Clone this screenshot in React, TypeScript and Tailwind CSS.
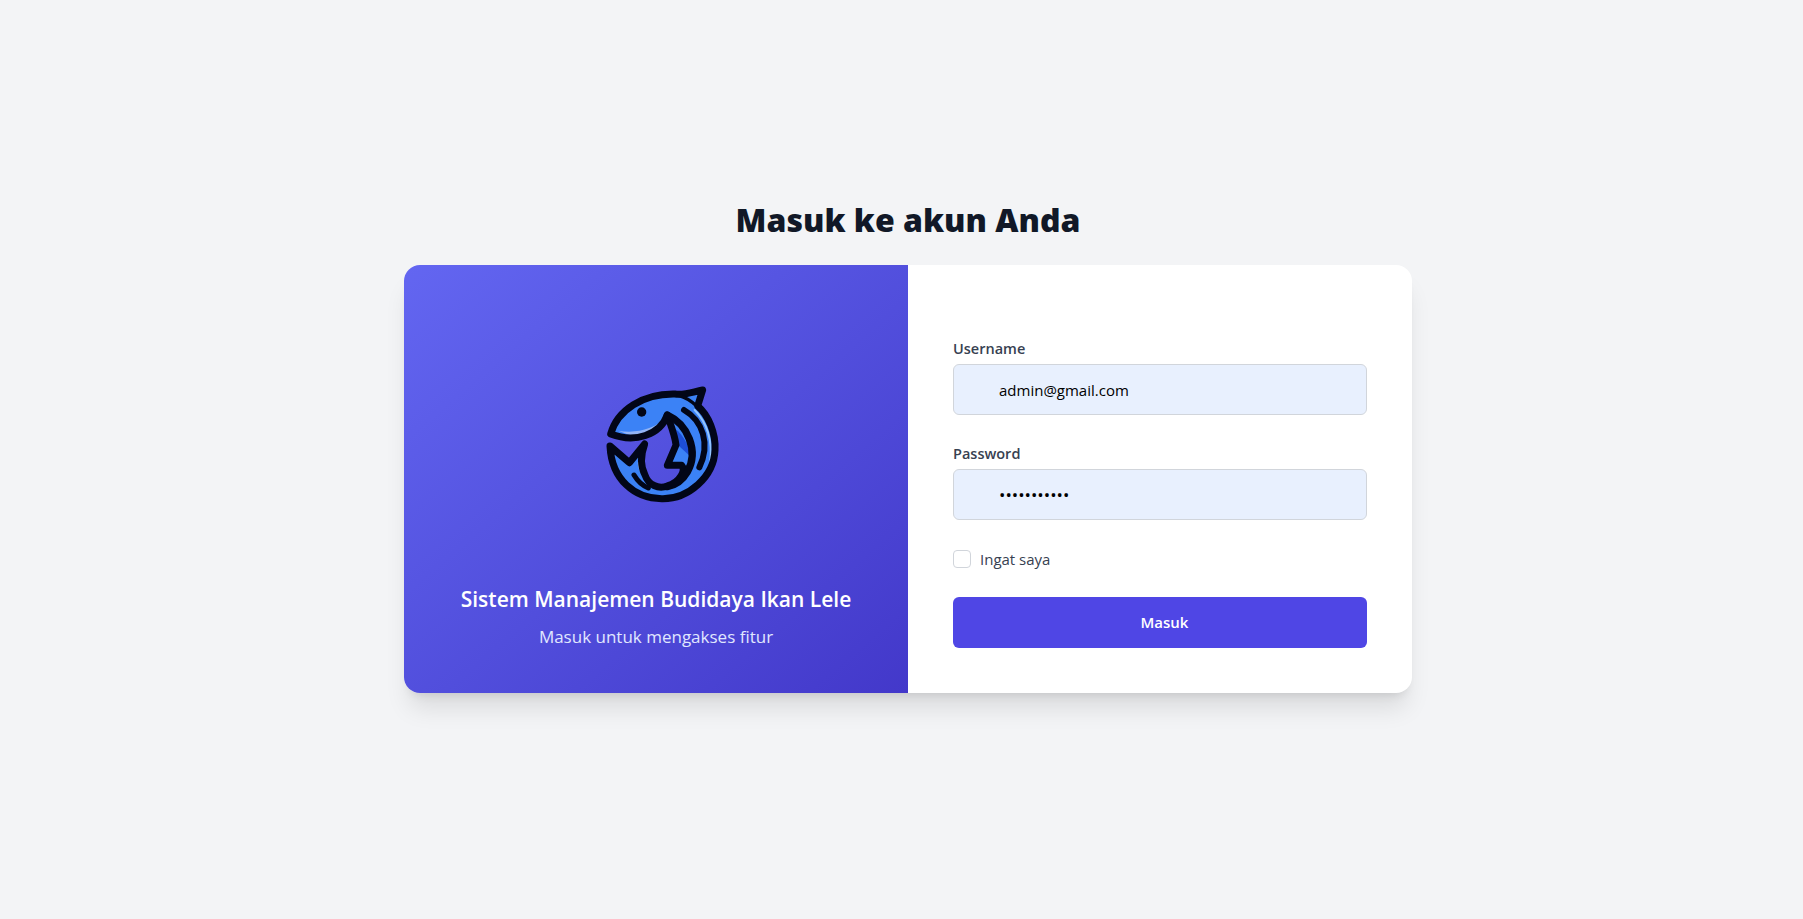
function FishLogo() {
  const ink = "#020617";
  const body = "M92 222 C112 150 190 100 285 102 C315 106 340 95 368 90 L353 138 C385 165 408 220 405 270 C402 350 325 418 245 416 C165 416 95 360 90 258 L148 308 L194 252 C182 285 182 320 195 345 C205 375 235 388 262 378 C300 368 318 330 305 316 L262 316 L288 255 C285 225 270 190 262 165 C240 225 165 250 92 222 Z";
  return (
    <svg className="block ml-[18px]" width="170" height="160" viewBox="0 0 510 480" fill="none" strokeLinecap="round" strokeLinejoin="round">
      <path d={body} fill="#3b82f6" />
      <path d="M272 198 L288 250 L332 290 C325 250 305 215 272 198 Z" fill="#1d4ed8" />
      <path d="M115 212 C170 222 225 205 252 178 C248 210 200 228 150 226 Z" fill="#93b4f5" />
      <path d="M344 150 C378 185 398 235 391 305" stroke="#93c5fd" strokeWidth="6" />
      <path d="M182 275 C174 300 174 322 186 338" stroke="#bfdbfe" strokeWidth="6" />
      <path d={body} stroke={ink} strokeWidth="21" />
      <path d="M295 106 C318 112 336 124 352 140" stroke={ink} strokeWidth="10" />
      <path d="M262 165 C322 192 358 272 322 336 C308 360 285 376 262 380" stroke={ink} strokeWidth="22" />
      <path d="M312 150 C368 182 392 252 358 322" stroke={ink} strokeWidth="18" />
      <path d="M162 345 C172 362 186 376 205 384" stroke={ink} strokeWidth="15" />
      <circle cx="185" cy="156" r="14" fill={ink} />
    </svg>
  );
}

export default function App() {
  return (
    <div className="min-h-screen bg-[#f3f4f6] flex flex-col items-center pl-[13px] pt-[198px] font-['Open_Sans','Noto_Sans',sans-serif]">
      <h1 className="text-[32px] leading-[44px] font-extrabold text-[#111827] mb-[23px]">Masuk ke akun Anda</h1>
      <div className="w-[1008px] h-[428px] flex rounded-2xl overflow-hidden bg-white shadow-[0_20px_25px_-5px_rgba(0,0,0,0.1),0_8px_10px_-6px_rgba(0,0,0,0.1)]">
        <div className="w-[504px] flex flex-col items-center bg-gradient-to-br from-[#6366f1] to-[#4338ca] text-center pt-[95px]">
          <FishLogo />
          <p className="mt-[65px] text-[21px] leading-7 font-semibold text-white">Sistem Manajemen Budidaya Ikan Lele</p>
          <p className="mt-[12px] text-[17px] leading-6 text-[#e0e7ff]">Masuk untuk mengakses fitur</p>
        </div>
        <div className="flex-1 px-[45px] pt-[73px]">
          <label className="block text-[14.5px] leading-[21px] font-semibold text-[#374151] mb-[5px]">Username</label>
          <input readOnly value="admin@gmail.com" className="block w-full h-[51px] pl-[45px] rounded-md border border-[#d1d5db] bg-[#e8f0fe] text-[15px] text-black outline-none" />
          <label className="block mt-[28px] text-[14.5px] leading-[21px] font-semibold text-[#374151] mb-[5px]">Password</label>
          <input readOnly type="password" value="admin123456" className="block w-full h-[51px] pl-[45px] rounded-md border border-[#d1d5db] bg-[#e8f0fe] text-[17px] text-black outline-none" />
          <label className="flex items-center mt-[30px] gap-[9px]">
            <span className="w-[18px] h-[18px] rounded border border-[#d1d5db] bg-white" />
            <span className="text-[15px] leading-[18px] text-[#374151]">Ingat saya</span>
          </label>
          <button className="block mt-[29px] w-full h-[51px] pl-[9px] rounded-md bg-[#4f46e5] text-white text-[15px] font-semibold">Masuk</button>
        </div>
      </div>
    </div>
  );
}
